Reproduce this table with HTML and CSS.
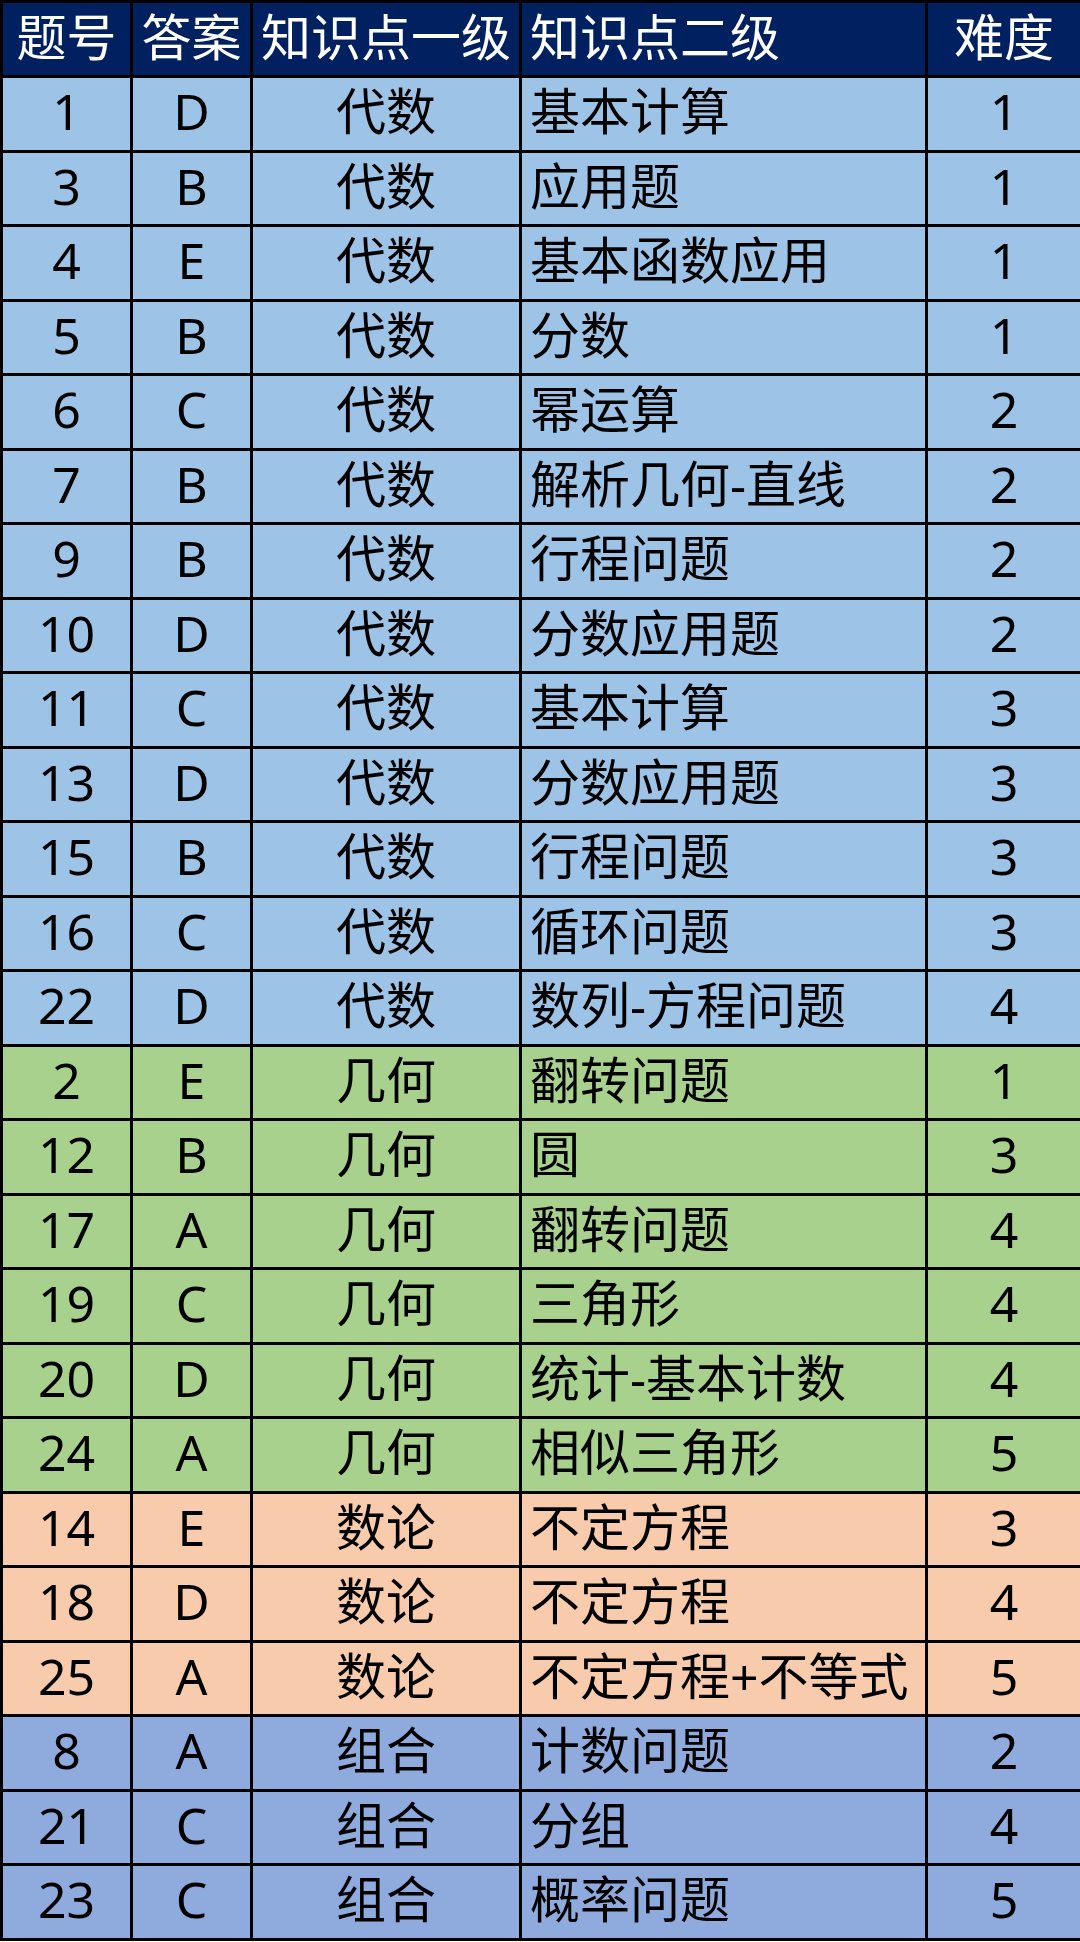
FILE: index.html
```html
<!DOCTYPE html>
<html lang="zh-CN">
<head>
<meta charset="utf-8">
<title>题目知识点</title>
<link rel="stylesheet" href="styles.css">
</head>
<body>
<table class="sheet">
  <colgroup>
    <col class="c-no"><col class="c-ans"><col class="c-k1"><col class="c-k2"><col class="c-lv">
  </colgroup>
  <thead>
    <tr class="head">
      <th>题号</th><th>答案</th><th>知识点一级</th><th class="left">知识点二级</th><th>难度</th>
    </tr>
  </thead>
  <tbody>
    <tr class="alg"><td>1</td><td>D</td><td>代数</td><td class="left">基本计算</td><td>1</td></tr>
    <tr class="alg"><td>3</td><td>B</td><td>代数</td><td class="left">应用题</td><td>1</td></tr>
    <tr class="alg"><td>4</td><td>E</td><td>代数</td><td class="left">基本函数应用</td><td>1</td></tr>
    <tr class="alg"><td>5</td><td>B</td><td>代数</td><td class="left">分数</td><td>1</td></tr>
    <tr class="alg"><td>6</td><td>C</td><td>代数</td><td class="left">幂运算</td><td>2</td></tr>
    <tr class="alg"><td>7</td><td>B</td><td>代数</td><td class="left">解析几何-直线</td><td>2</td></tr>
    <tr class="alg"><td>9</td><td>B</td><td>代数</td><td class="left">行程问题</td><td>2</td></tr>
    <tr class="alg"><td>10</td><td>D</td><td>代数</td><td class="left">分数应用题</td><td>2</td></tr>
    <tr class="alg"><td>11</td><td>C</td><td>代数</td><td class="left">基本计算</td><td>3</td></tr>
    <tr class="alg"><td>13</td><td>D</td><td>代数</td><td class="left">分数应用题</td><td>3</td></tr>
    <tr class="alg"><td>15</td><td>B</td><td>代数</td><td class="left">行程问题</td><td>3</td></tr>
    <tr class="alg"><td>16</td><td>C</td><td>代数</td><td class="left">循环问题</td><td>3</td></tr>
    <tr class="alg"><td>22</td><td>D</td><td>代数</td><td class="left">数列-方程问题</td><td>4</td></tr>
    <tr class="geo"><td>2</td><td>E</td><td>几何</td><td class="left">翻转问题</td><td>1</td></tr>
    <tr class="geo"><td>12</td><td>B</td><td>几何</td><td class="left">圆</td><td>3</td></tr>
    <tr class="geo"><td>17</td><td>A</td><td>几何</td><td class="left">翻转问题</td><td>4</td></tr>
    <tr class="geo"><td>19</td><td>C</td><td>几何</td><td class="left">三角形</td><td>4</td></tr>
    <tr class="geo"><td>20</td><td>D</td><td>几何</td><td class="left">统计-基本计数</td><td>4</td></tr>
    <tr class="geo"><td>24</td><td>A</td><td>几何</td><td class="left">相似三角形</td><td>5</td></tr>
    <tr class="num"><td>14</td><td>E</td><td>数论</td><td class="left">不定方程</td><td>3</td></tr>
    <tr class="num"><td>18</td><td>D</td><td>数论</td><td class="left">不定方程</td><td>4</td></tr>
    <tr class="num"><td>25</td><td>A</td><td>数论</td><td class="left">不定方程+不等式</td><td>5</td></tr>
    <tr class="comb"><td>8</td><td>A</td><td>组合</td><td class="left">计数问题</td><td>2</td></tr>
    <tr class="comb"><td>21</td><td>C</td><td>组合</td><td class="left">分组</td><td>4</td></tr>
    <tr class="comb"><td>23</td><td>C</td><td>组合</td><td class="left">概率问题</td><td>5</td></tr>
  </tbody>
</table>
</body>
</html>
```

FILE: styles.css
```css
html, body {
  margin: 0;
  padding: 0;
  background: #ffffff;
}

.sheet {
  width: 1080px;
  border-collapse: collapse;
  table-layout: fixed;
  font-family: "Noto Sans", "Noto Sans CJK SC", sans-serif;
  font-size: 50px;
  color: #000000;
}

.c-no { width: 130px; }
.c-ans { width: 120px; }
.c-k1 { width: 269px; }
.c-k2 { width: 406px; }
.c-lv { width: 155px; }

.sheet th,
.sheet td {
  border: 3px solid #000000;
  text-align: center;
  vertical-align: middle;
  padding: 0 0 5px 0;
  line-height: 1;
  white-space: nowrap;
  overflow: hidden;
  font-weight: normal;
}

.sheet .left {
  text-align: left;
  padding-left: 8px;
}

.head {
  height: 75px;
}

.head th {
  background: #002060;
  color: #ffffff;
  font-size: 50px;
}

tbody tr {
  height: 74.5px;
}

.alg td { background: #9dc3e6; }
.geo td { background: #a9d18e; }
.num td { background: #f8cbad; }
.comb td { background: #8faadc; }
```
